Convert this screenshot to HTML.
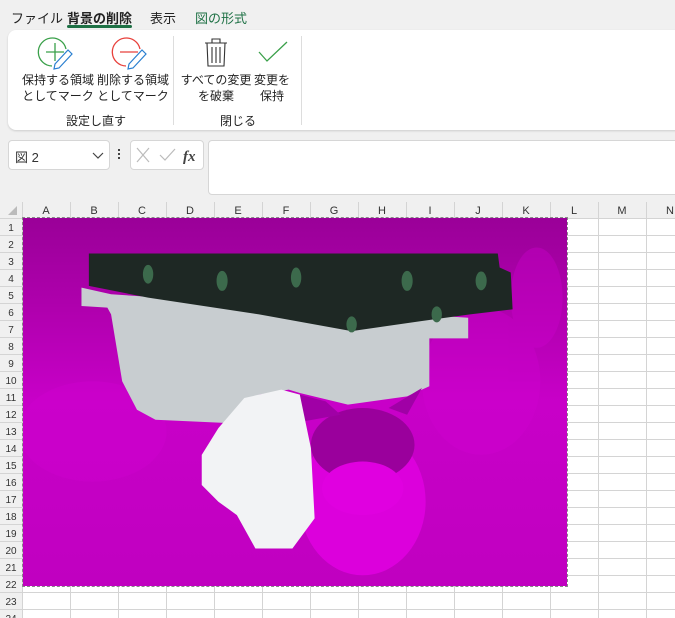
<!DOCTYPE html>
<html><head><meta charset="utf-8"><style>
*{margin:0;padding:0;box-sizing:border-box}
body{width:675px;height:618px;overflow:hidden;background:#f0f0f0;font-family:"Liberation Sans","Noto Sans CJK JP",sans-serif;position:relative;color:#222}
.a{position:absolute}
.tab{position:absolute;top:8px;font-size:13px}
.lbl{position:absolute;font-size:12px;text-align:center;line-height:16px;color:#222}
.grid{position:absolute;left:0;top:202px;width:675px;height:416px;background:#fff}
</style></head><body>
<div class="tab" style="left:11px">ファイル</div>
<div class="tab" style="left:67px;font-weight:bold">背景の削除</div>
<div class="a" style="left:67px;top:25px;width:65px;height:3px;background:#1e7145;border-radius:2px"></div>
<div class="tab" style="left:150px">表示</div>
<div class="tab" style="left:195px;color:#1e7145">図の形式</div>

<div class="a" style="left:8px;top:30px;width:680px;height:100px;background:#fff;border-radius:8px;box-shadow:0 1px 2px rgba(0,0,0,.15)"></div>
<svg class="a" style="left:0;top:0" width="675" height="135">
 <path d="M66 49 A14 14 0 1 0 52 66" fill="none" stroke="#3aa04a" stroke-width="1.3"/>
 <path d="M55 43V61M46 52H64" stroke="#3aa04a" stroke-width="1.3"/>
 <path d="M140 49 A14 14 0 1 0 126 66" fill="none" stroke="#e8413c" stroke-width="1.3"/>
 <path d="M120 52H138" stroke="#e8413c" stroke-width="1.3"/>
 <g fill="#fff" stroke="#2a7fd0" stroke-width="1.2"><path d="M55 64 L68 50 L72 54 L59 68 L54 69 Z"/><path d="M129 64 L142 50 L146 54 L133 68 L128 69 Z"/></g>
 <g fill="none" stroke="#333" stroke-width="1.1"><path d="M205 43H227M212 43V39H220V43M207 43L208 66H224L225 43M212 47V63M216 47V63M220 47V63"/></g>
 <path d="M259 52L267 61L287 42" fill="none" stroke="#3aa04a" stroke-width="1.3"/>
 <line x1="173.5" y1="36" x2="173.5" y2="125" stroke="#ddd"/>
 <line x1="301.5" y1="36" x2="301.5" y2="125" stroke="#ddd"/>
</svg>
<div class="lbl" style="left:18px;top:72px;width:80px">保持する領域<br>としてマーク</div>
<div class="lbl" style="left:93px;top:72px;width:80px">削除する領域<br>としてマーク</div>
<div class="lbl" style="left:56px;top:113px;width:80px">設定し直す</div>
<div class="lbl" style="left:180px;top:72px;width:72px">すべての変更<br>を破棄</div>
<div class="lbl" style="left:250px;top:72px;width:44px">変更を<br>保持</div>
<div class="lbl" style="left:210px;top:113px;width:56px">閉じる</div>

<div class="a" style="left:8px;top:140px;width:102px;height:30px;background:#fff;border:1px solid #d6d6d6;border-radius:4px"></div>
<div class="a" style="left:15px;top:147px;font-size:13px;color:#333">図 2</div>
<svg class="a" style="left:92px;top:152px" width="12" height="8"><path d="M1 1L6 6L11 1" fill="none" stroke="#444" stroke-width="1.2"/></svg>
<div class="a" style="left:118px;top:149px;width:2px;height:2px;background:#444;box-shadow:0 4px 0 #444,0 8px 0 #444"></div>
<div class="a" style="left:130px;top:140px;width:74px;height:30px;background:#fff;border:1px solid #d6d6d6;border-radius:4px"></div>
<svg class="a" style="left:130px;top:140px" width="74" height="30"><path d="M7 8L19 22M19 8L7 22M30 15L35 20L45 9" fill="none" stroke="#bbb" stroke-width="1.2"/><text x="53" y="21" font-family="Liberation Serif" font-style="italic" font-weight="bold" font-size="15" fill="#444">fx</text></svg>
<div class="a" style="left:208px;top:140px;width:480px;height:55px;background:#fff;border:1px solid #d6d6d6;border-radius:4px"></div>

<div class="grid">
<svg width="675" height="416" style="position:absolute;left:0;top:0">
 <rect x="0" y="0" width="675" height="16" fill="#f0f0f0"/>
 <rect x="0" y="0" width="22" height="416" fill="#f0f0f0"/>
 <path d="M17 4V13H8Z" fill="#bbb"/>
 <g stroke="#d4d4d4" stroke-width="1">
  <path d="M22.5 0V416M70.5 0V416M118.5 0V416M166.5 0V416M214.5 0V416M262.5 0V416M310.5 0V416M358.5 0V416M406.5 0V416M454.5 0V416M502.5 0V416M550.5 0V416M598.5 0V416M646.5 0V416"/>
  <path d="M0 16.5H675M0 33.5H675M0 50.5H675M0 67.5H675M0 84.5H675M0 101.5H675M0 118.5H675M0 135.5H675M0 152.5H675M0 169.5H675M0 186.5H675M0 203.5H675M0 220.5H675M0 237.5H675M0 254.5H675M0 271.5H675M0 288.5H675M0 305.5H675M0 322.5H675M0 339.5H675M0 356.5H675M0 373.5H675M0 390.5H675M0 407.5H675"/>
 </g>
 <g font-size="11" fill="#333" text-anchor="middle" font-family="Liberation Sans">
  <text x="46" y="12">A</text><text x="94" y="12">B</text><text x="142" y="12">C</text><text x="190" y="12">D</text><text x="238" y="12">E</text><text x="286" y="12">F</text><text x="334" y="12">G</text><text x="382" y="12">H</text><text x="430" y="12">I</text><text x="478" y="12">J</text><text x="526" y="12">K</text><text x="574" y="12">L</text><text x="622" y="12">M</text><text x="670" y="12">N</text>
 </g>
 <g font-size="10" fill="#333" text-anchor="middle" font-family="Liberation Sans">
  <text x="11" y="29">1</text><text x="11" y="46">2</text><text x="11" y="63">3</text><text x="11" y="80">4</text><text x="11" y="97">5</text><text x="11" y="114">6</text><text x="11" y="131">7</text><text x="11" y="148">8</text><text x="11" y="165">9</text><text x="11" y="182">10</text><text x="11" y="199">11</text><text x="11" y="216">12</text><text x="11" y="233">13</text><text x="11" y="250">14</text><text x="11" y="267">15</text><text x="11" y="284">16</text><text x="11" y="301">17</text><text x="11" y="318">18</text><text x="11" y="335">19</text><text x="11" y="352">20</text><text x="11" y="369">21</text><text x="11" y="386">22</text><text x="11" y="403">23</text><text x="11" y="420">24</text>
 </g>
</svg>
</div>

<svg class="a" style="left:23px;top:218px;outline:1px dashed #888" width="544" height="368" viewBox="62 12 1470 1100" preserveAspectRatio="none">
 <defs><linearGradient id="g" x1="0" y1="0" x2="0" y2="1"><stop offset="0" stop-color="#9a0098"/><stop offset=".25" stop-color="#b000ae"/><stop offset=".5" stop-color="#c800c8"/><stop offset="1" stop-color="#c000c0"/></linearGradient></defs>
 <rect x="62" y="12" width="1470" height="1100" fill="url(#g)"/>
 <g fill="#d000d0" opacity=".35"><ellipse cx="1450" cy="250" rx="70" ry="150"/><ellipse cx="1300" cy="500" rx="160" ry="220"/><ellipse cx="250" cy="650" rx="200" ry="150"/></g>
 <polygon points="220,220 300,240 1265,310 1265,372 1160,372 1160,515 1100,545 940,570 810,535 780,525 700,540 620,625 420,615 370,585 330,500 300,300 290,280 220,275" fill="#c8cdd0"/>
 <polygon points="240,118 1345,118 1350,160 1380,175 1385,285 1270,300 1140,320 950,350 700,300 400,250 240,215" fill="#1e2824"/>
 <g fill="#3c6a4c"><ellipse cx="600" cy="200" rx="15" ry="30"/><ellipse cx="800" cy="190" rx="14" ry="30"/><ellipse cx="1100" cy="200" rx="15" ry="30"/><ellipse cx="1300" cy="200" rx="15" ry="28"/><ellipse cx="950" cy="330" rx="14" ry="24"/><ellipse cx="400" cy="180" rx="14" ry="28"/><ellipse cx="1180" cy="300" rx="14" ry="24"/></g>
 <ellipse cx="980" cy="860" rx="170" ry="220" fill="#dc00dc"/>
 <ellipse cx="980" cy="690" rx="140" ry="110" fill="#9a009c"/>
 <polygon points="810,540 880,560 920,600 820,620" fill="#a000a6"/>
 <polygon points="1140,520 1100,600 1050,580" fill="#a000a6"/>
 <ellipse cx="980" cy="820" rx="110" ry="80" fill="#e000e0"/>
 <polygon points="590,640 660,550 760,525 810,540 840,700 850,910 790,1000 690,1000 640,900 590,860 545,810 545,720" fill="#f2f3f5"/>
</svg>
</body></html>
